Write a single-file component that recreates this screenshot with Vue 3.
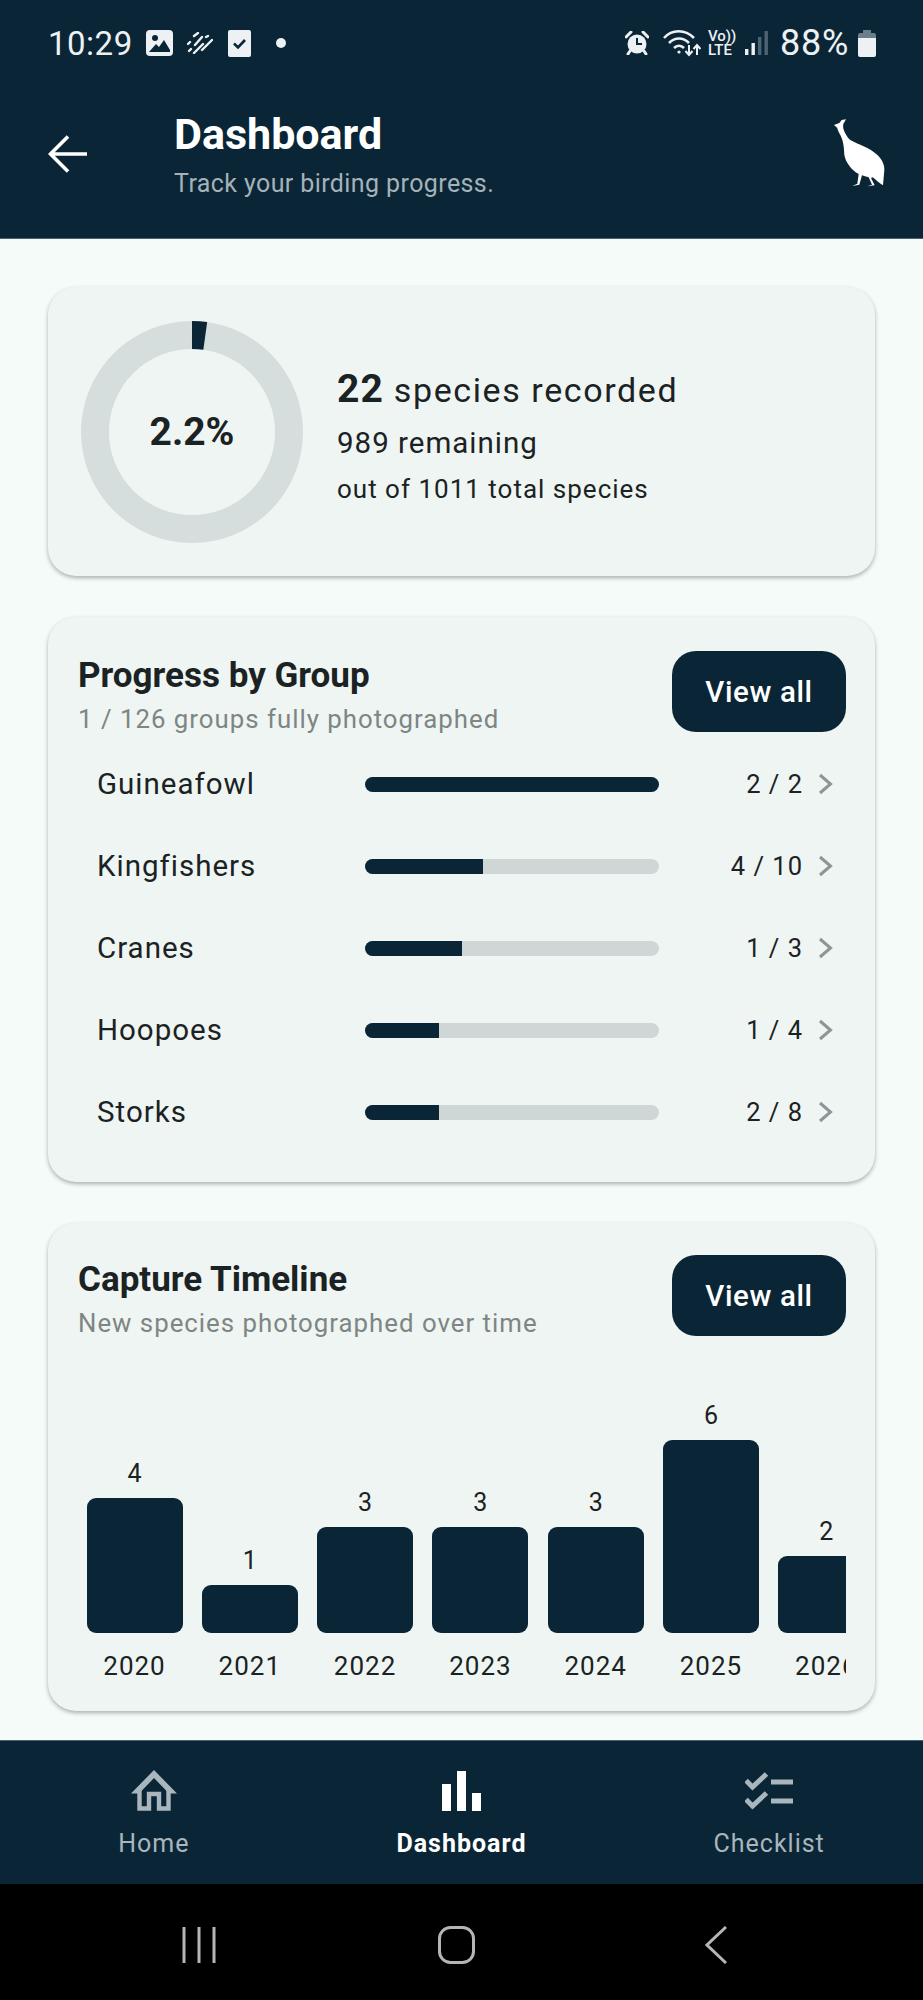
<script setup>
const groups = [
  { name: 'Guineafowl', count: '2 / 2', pct: 100 },
  { name: 'Kingfishers', count: '4 / 10', pct: 40 },
  { name: 'Cranes', count: '1 / 3', pct: 33 },
  { name: 'Hoopoes', count: '1 / 4', pct: 25 },
  { name: 'Storks', count: '2 / 8', pct: 25 },
]
const years = [
  { year: 2020, n: 4 },
  { year: 2021, n: 1 },
  { year: 2022, n: 3 },
  { year: 2023, n: 3 },
  { year: 2024, n: 3 },
  { year: 2025, n: 6 },
  { year: 2026, n: 2 },
]
// bar height grows linearly with the count
const barHeight = (n) => 19 + n * 29 + 'px'
</script>

<template>
  <div class="screen">
    <div class="status">
      <span class="clock">10:29</span>
      <svg class="s-img" width="27" height="26" viewBox="0 0 27 26">
        <rect width="27" height="26" rx="4" fill="#eef1f3" />
        <circle cx="9" cy="8" r="3" fill="#0a2636" />
        <path d="M3 22 L10 14 L13 17 L18 10 L24 20 L24 22 Z" fill="#0a2636" />
      </svg>
      <svg class="s-str" width="26" height="22" viewBox="0 0 26 22" stroke="#eef1f3" stroke-width="2.4" stroke-linecap="round">
        <path d="M1 12 L3 10 M7 4 L11 1 M2 19 L4 17 M8 13 L15 5 M19 5 L21 4 M7 21 L16 12 M15 18 L25 8" />
      </svg>
      <svg class="s-chk" width="23" height="27" viewBox="0 0 23 27">
        <rect width="23" height="27" rx="2" fill="#eef1f3" />
        <path d="M6 13.5 L10 17.5 L17 10" fill="none" stroke="#0a2636" stroke-width="2.6" />
      </svg>
      <span class="s-dot"></span>
      <span class="s-space"></span>
      <svg class="s-alarm" width="24" height="24" viewBox="0 0 24 24">
        <circle cx="12" cy="13" r="9.5" fill="#eef1f3" />
        <path d="M12 7 V13 H17" fill="none" stroke="#0a2636" stroke-width="2" />
        <path d="M1 6 L6 1 M23 6 L18 1 M5 20 L3 23 M19 20 L21 23" stroke="#eef1f3" stroke-width="3" stroke-linecap="round" />
      </svg>
      <svg class="s-wifi" width="38" height="28" viewBox="0 0 38 28" fill="none" stroke="#eef1f3" stroke-width="2.6">
        <path d="M1 9 C9 0 22 0 31 9 M6 14 C12 8 20 8 26 14 M11 19 C14 16 18 16 21 19" />
        <circle cx="16" cy="23" r="1.6" fill="#eef1f3" stroke="none" />
        <path d="M26 16 V26 M22.5 22 L26 26 L29.5 22 M34 26 V16 M30.5 20 L34 16 L37.5 20" stroke-width="2" />
      </svg>
      <span class="s-volte"><span>Vo))</span><span>LTE</span></span>
      <svg class="s-sig" width="23" height="24" viewBox="0 0 23 24">
        <rect x="0" y="18" width="3.4" height="6" fill="#eef1f3" />
        <rect x="6.5" y="12" width="3.4" height="12" fill="#eef1f3" />
        <rect x="13" y="6" width="3.4" height="18" fill="#4d6474" />
        <rect x="19.5" y="0" width="3.4" height="24" fill="#4d6474" />
      </svg>
      <span class="pct">88%</span>
      <svg class="s-batt" width="18" height="27" viewBox="0 0 18 27">
        <path d="M5 0 H13 V3 H5 Z" fill="#6b7f8b" />
        <path d="M2 3 H16 Q18 3 18 5 V8 H0 V5 Q0 3 2 3 Z" fill="#6b7f8b" />
        <path d="M0 8 H18 V25 Q18 27 16 27 H2 Q0 27 0 25 Z" fill="#eef1f3" />
      </svg>
    </div>

    <header class="appbar">
      <svg class="back" width="39" height="38" viewBox="0 0 39 38" fill="none" stroke="#fff" stroke-width="3.6">
        <path d="M39 19 H3 M20 1.5 L2.5 19 L20 36.5" />
      </svg>
      <div class="appbar-text">
        <div class="title">Dashboard</div>
        <div class="subtitle">Track your birding progress.</div>
      </div>
      <svg class="bird" width="110" height="100" viewBox="0 0 330 300">
        <path fill="#fff" d="M132 75 L148 69 L155 60 L168 58 L160 72 C157 85 164 100 178 118 C195 130 225 138 250 155 C272 170 284 190 283 210 L279 256 C268 250 258 240 248 232 L243 234 L254 256 L232 259 L246 254 L236 232 C228 230 222 228 216 226 L208 254 L187 258 L202 251 L206 222 C185 210 168 190 163 165 C162 140 160 120 148 100 C144 92 142 86 142 84 Z" />
      </svg>
    </header>

    <main class="content">
      <section class="card summary">
        <div class="ring">
          <svg width="222" height="222" viewBox="0 0 222 222">
            <circle cx="111" cy="111" r="97" fill="none" stroke="#d6dddd" stroke-width="28" />
            <circle cx="111" cy="111" r="97" fill="none" stroke="#0a2636" stroke-width="28" pathLength="100" stroke-dasharray="2.2 97.8" transform="rotate(-90 111 111)" />
          </svg>
          <span class="ring-label">2.2%</span>
        </div>
        <div class="summary-text">
          <div class="sum-main"><b>22</b> species recorded</div>
          <div class="sum-rem">989 remaining</div>
          <div class="sum-total">out of 1011 total species</div>
        </div>
      </section>

      <section class="card groups">
        <div class="card-head">
          <div>
            <div class="card-title">Progress by Group</div>
            <div class="card-sub">1 / 126 groups fully photographed</div>
          </div>
          <button class="view-all">View all</button>
        </div>
        <div class="group-list">
          <div v-for="g in groups" :key="g.name" class="group-row">
            <span class="group-name">{{ g.name }}</span>
            <div class="track"><div class="fill" :style="{ width: g.pct + '%' }"></div></div>
            <span class="group-count">{{ g.count }}</span>
            <svg class="chev" width="15" height="22" viewBox="0 0 15 22" fill="none" stroke="#8d9596" stroke-width="3">
              <path d="M2 2 L12.5 11 L2 20" />
            </svg>
          </div>
        </div>
      </section>

      <section class="card timeline">
        <div class="card-head">
          <div>
            <div class="card-title">Capture Timeline</div>
            <div class="card-sub">New species photographed over time</div>
          </div>
          <button class="view-all">View all</button>
        </div>
        <div class="chart">
          <div v-for="y in years" :key="y.year" class="col">
            <span class="col-val">{{ y.n }}</span>
            <div class="col-bar" :style="{ height: barHeight(y.n) }"></div>
            <span class="col-year">{{ y.year }}</span>
          </div>
        </div>
      </section>
    </main>

    <nav class="bottom">
      <div class="tab">
        <svg width="46" height="42" viewBox="0 0 46 42" fill="none" stroke="#a9b6bd" stroke-width="4.4">
          <path d="M23 0 L46 23.5 H38 L23 8 L8 23.5 H0 Z" fill="#a9b6bd" stroke="none" />
          <path d="M8.5 20 V38.5 H18 V24 H28 V38.5 H37.5 V20" />
        </svg>
        <span>Home</span>
      </div>
      <div class="tab active">
        <svg width="39" height="40" viewBox="0 0 39 40" fill="#fff">
          <rect x="0" y="13" width="9" height="27" />
          <rect x="15" y="0" width="9" height="40" />
          <rect x="30" y="22" width="9" height="18" />
        </svg>
        <span>Dashboard</span>
      </div>
      <div class="tab">
        <svg width="48" height="36" viewBox="0 0 48 36" fill="none" stroke="#a9b6bd">
          <path d="M1 7.5 L7.5 14 L21.5 1 M1 26.5 L7.5 33 L21.5 20" stroke-width="5" />
          <path d="M26 9 H48 M26 28 H48" stroke-width="5" />
        </svg>
        <span>Checklist</span>
      </div>
    </nav>

    <div class="sysbar">
      <svg width="34" height="36" viewBox="0 0 34 36" stroke="#b5b5b5" stroke-width="3">
        <path d="M2 0 V36 M17 0 V36 M32 0 V36" />
      </svg>
      <svg width="37" height="38" viewBox="0 0 37 38" fill="none" stroke="#b5b5b5" stroke-width="3">
        <rect x="1.5" y="1.5" width="34" height="35" rx="11" />
      </svg>
      <svg width="22" height="38" viewBox="0 0 22 38" fill="none" stroke="#b5b5b5" stroke-width="3">
        <path d="M21 1 L2 19 L21 37" />
      </svg>
    </div>
  </div>
</template>

<style>
html, body { margin: 0; background: #f4fbf8; }
</style>

<style scoped>
.screen {
  width: 923px;
  height: 2000px;
  display: flex;
  flex-direction: column;
  font-family: Roboto, "Liberation Sans", sans-serif;
  color: #1b2224;
  background: #f4fbf8;
  overflow: hidden;
}
.status {
  height: 86px;
  box-sizing: border-box;
  padding: 0 47px 0 48px;
  background: #0a2636;
  display: flex;
  align-items: center;
  color: #eef1f3;
}
.clock { font-size: 33px; width: 98px; letter-spacing: 0.5px; }
.s-str { margin-left: 14px; }
.s-chk { margin-left: 15px; }
.s-dot { width: 10px; height: 10px; border-radius: 50%; background: #eef1f3; margin-left: 25px; }
.s-space { flex: 1; }
.s-wifi { margin-left: 14px; }
.s-volte {
  margin-left: 7px;
  width: 25px;
  display: flex;
  flex-direction: column;
  font-size: 15px;
  line-height: 14px;
  font-weight: 500;
}
.s-sig { margin-left: 12px; }
.pct { font-size: 36px; margin-left: 12px; width: 71px; letter-spacing: 0.8px; white-space: nowrap; }
.s-batt { margin-left: 7px; }

.appbar {
  height: 153px;
  background: #0a2636;
  border-bottom: 1px solid #4a6170;
  box-sizing: border-box;
  display: flex;
  align-items: center;
  padding: 0 0 14px 48px;
  position: relative;
}
.appbar-text { margin-left: 87px; }
.title { color: #fff; font-size: 43px; font-weight: 700; line-height: 47px; }
.subtitle { color: #a5b2ba; font-size: 25px; line-height: 30px; margin-top: 11px; letter-spacing: 0.4px; }
.back { margin-top: -2px; }
.bird { position: absolute; right: 23px; top: 14px; }

.content {
  flex: 1;
  padding: 48px 48px 0;
  display: flex;
  flex-direction: column;
  gap: 41px;
}
.card {
  background: #eff5f2;
  border-radius: 28px;
  box-shadow: 0 2px 4px rgba(0, 0, 0, 0.3);
  box-sizing: border-box;
}
.summary {
  height: 289px;
  display: flex;
  align-items: center;
  padding-left: 33px;
}
.ring { position: relative; width: 222px; height: 222px; }
.ring svg { display: block; }
.ring-label {
  position: absolute;
  inset: 0;
  display: flex;
  align-items: center;
  justify-content: center;
  font-size: 39px;
  font-weight: 700;
}
.summary-text { margin: 10px 0 0 34px; }
.sum-main { font-size: 34px; line-height: 40px; letter-spacing: 1.6px; }
.sum-main b { font-size: 39px; letter-spacing: 1px; }
.sum-rem { font-size: 29.5px; line-height: 36px; margin-top: 15px; letter-spacing: 1px; }
.sum-total { font-size: 26px; line-height: 30px; margin-top: 13px; letter-spacing: 1px; }

.groups { height: 565px; padding: 34px 29px 0 30px; }
.timeline { height: 488px; padding: 32px 29px 0 30px; }
.card-head { display: flex; justify-content: space-between; align-items: flex-start; }
.card-title { font-size: 35px; font-weight: 700; line-height: 40px; margin-top: 5px; }
.card-sub { font-size: 25.8px; line-height: 30px; margin-top: 8px; color: #7d8585; letter-spacing: 1px; }
.view-all {
  width: 174px;
  height: 81px;
  border: 0;
  border-radius: 24px;
  background: #0a2636;
  color: #fff;
  font-family: inherit;
  font-size: 29.5px;
  font-weight: 500;
  letter-spacing: 0.6px;
}

.group-list { margin-top: 9px; display: flex; flex-direction: column; }
.group-row { height: 82px; display: flex; align-items: center; padding-left: 19px; }
.group-name { width: 268px; font-size: 29.5px; letter-spacing: 1px; }
.track { width: 294px; height: 15px; border-radius: 8px; background: #ced6d6; overflow: hidden; }
.fill { height: 100%; background: #0a2636; }
.group-count { width: 144px; text-align: right; font-size: 25.5px; letter-spacing: 1px; }
.chev { margin-left: 15px; }

.chart {
  margin-top: 53px;
  padding-left: 8.5px;
  height: 290px;
  display: flex;
  align-items: flex-end;
  gap: 19.3px;
  overflow: hidden;
}
.col { flex: 0 0 96px; display: flex; flex-direction: column; align-items: center; }
.col-val { font-size: 25px; line-height: 30px; margin-bottom: 9px; }
.col-bar { width: 96px; background: #0a2636; border-radius: 9px; }
.col-year { font-size: 26px; line-height: 30px; margin-top: 18px; letter-spacing: 1px; }

.bottom {
  height: 144px;
  background: #0a2636;
  border-top: 1px solid #4a6170;
  box-sizing: border-box;
  display: grid;
  grid-template-columns: repeat(3, 1fr);
  flex-shrink: 0;
}
.tab {
  display: flex;
  flex-direction: column;
  align-items: center;
  padding-top: 29px;
  color: #a9b6bd;
  font-size: 25px;
  letter-spacing: 1px;
}
.tab svg { height: 42px; }
.tab span { margin-top: 17px; line-height: 30px; }
.tab.active { color: #fff; font-weight: 700; }
.sysbar {
  height: 116px;
  flex-shrink: 0;
  background: #000;
  display: flex;
  align-items: center;
  position: relative;
}
.sysbar svg:nth-child(1) { margin-left: 182px; margin-top: 6px; }
.sysbar svg:nth-child(2) { margin-left: 222px; margin-top: 6px; }
.sysbar svg:nth-child(3) { margin-left: 230px; margin-top: 6px; }
</style>
